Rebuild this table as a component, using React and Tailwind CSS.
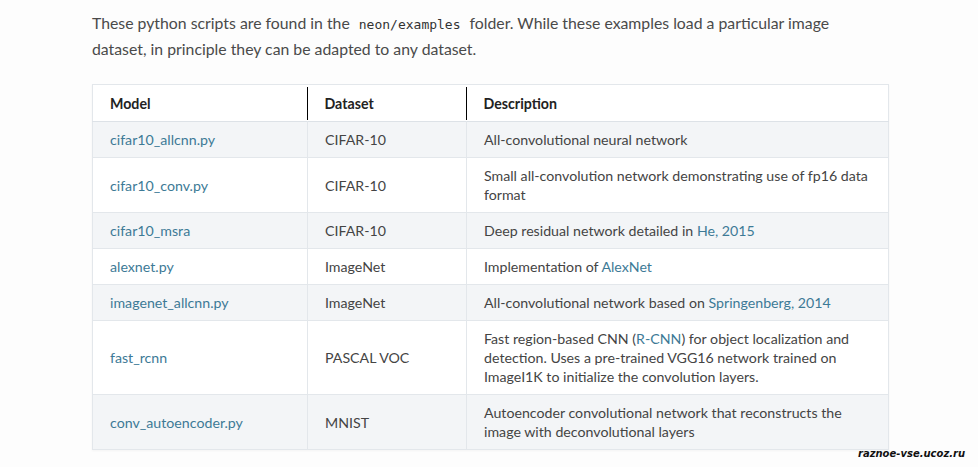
const rows = [
  { model: 'cifar10_allcnn.py', dataset: 'CIFAR-10', desc: [['All-convolutional neural network']] },
  { model: 'cifar10_conv.py', dataset: 'CIFAR-10', desc: [['Small all-convolution network demonstrating use of fp16 data'], ['format']] },
  { model: 'cifar10_msra', dataset: 'CIFAR-10', desc: [['Deep residual network detailed in ', { link: 'He, 2015' }]] },
  { model: 'alexnet.py', dataset: 'ImageNet', desc: [['Implementation of ', { link: 'AlexNet' }]] },
  { model: 'imagenet_allcnn.py', dataset: 'ImageNet', desc: [['All-convolutional network based on ', { link: 'Springenberg, 2014' }]] },
  {
    model: 'fast_rcnn',
    dataset: 'PASCAL VOC',
    desc: [
      ['Fast region-based CNN (', { link: 'R-CNN' }, ') for object localization and'],
      ['detection. Uses a pre-trained VGG16 network trained on'],
      ['ImageI1K to initialize the convolution layers.'],
    ],
  },
  {
    model: 'conv_autoencoder.py',
    dataset: 'MNIST',
    desc: [['Autoencoder convolutional network that reconstructs the'], ['image with deconvolutional layers']],
  },
];

const App = () => {
  return (
    <div className="relative min-h-[467px] bg-[#fdfdfd] text-[#444] font-['Lato',sans-serif]">
      <div className="pl-[92px] pt-[11px]">
        <p className="text-[15.8px] leading-[24px] text-[#4a4a4a] w-[760px]">
          These python scripts are found in the
          <code className="mx-[9px] font-['DejaVu_Sans_Mono',monospace] text-[13px] text-[#333]">neon/examples</code>
          folder. While these examples load a particular image dataset, in principle they can be adapted to any dataset.
        </p>

        <table className="mt-[23px] w-[796px] table-fixed border-collapse border border-[#e3e7eb] text-[14.2px] leading-[19px] shadow-[0_1px_2px_rgba(0,0,0,0.04)]">
          <colgroup>
            <col className="w-[215px]" />
            <col className="w-[159px]" />
            <col className="w-[422px]" />
          </colgroup>
          <thead>
            <tr className="bg-white border-b border-[#dde2e7]">
              <th className="text-left font-bold text-[#222] px-[17px] py-[8.5px]">Model</th>
              <th className="relative text-left font-bold text-[#222] px-[17px] py-[8.5px]">
                <span className="absolute left-[-1px] top-[2px] bottom-[1px] w-px bg-black" />
                Dataset
              </th>
              <th className="relative text-left font-bold text-[#222] px-[17px] py-[8.5px]">
                <span className="absolute left-[-1px] top-[2px] bottom-[1px] w-px bg-black" />
                Description
              </th>
            </tr>
          </thead>
          <tbody>
            {rows.map((r, i) => (
              <tr key={r.model} className={`border-t border-[#e3e7eb] ${i % 2 === 0 ? 'bg-[#f3f5f7]' : 'bg-white'}`}>
                <td className="px-[17px] py-[8px] text-[#3d7a96] border-r border-[#e3e7eb]">{r.model}</td>
                <td className="px-[17px] py-[8px] text-[#444] border-r border-[#e3e7eb]">{r.dataset}</td>
                <td className="pl-[17px] py-[8px] text-[#444] whitespace-nowrap">
                  {r.desc.map((line, k) => (
                    <div key={k}>
                      {line.map((d, j) =>
                        typeof d === 'string' ? (
                          <span key={j}>{d}</span>
                        ) : (
                          <span key={j} className="text-[#3d7a96]">{d.link}</span>
                        )
                      )}
                    </div>
                  ))}
                </td>
              </tr>
            ))}
          </tbody>
        </table>
      </div>

      <div className="absolute left-[858px] top-[446px] whitespace-nowrap text-[10px] font-bold italic text-[#111] font-['DejaVu_Sans',sans-serif] [text-shadow:0_0_1px_#fff]">
        raznoe-vse.ucoz.ru
      </div>
    </div>
  );
};

export default App;
